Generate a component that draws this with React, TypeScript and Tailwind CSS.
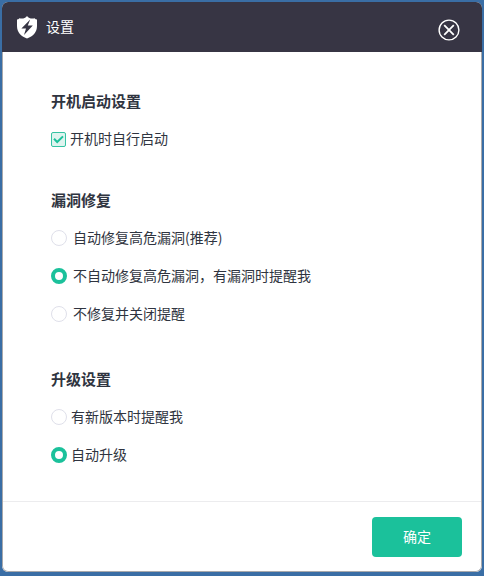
import React from "react";

type RadioOption = {
	value: string;
	label: React.ReactNode;
};

type RadioGroupProps = {
	title: string;
	name: string;
	options: RadioOption[];
	defaultValue: string;
	className?: string;
	rowClassName?: string;
};

const ShieldIcon = () => (
	<svg width="20" height="24" viewBox="0 0 20 24" aria-hidden="true">
		<path
			fill="#fff"
			d="M10 1C8 3.4 5.4 4 2.4 3.2C1.8 3.9 1 4.4 0 4.6V11C0 17 3.8 21.2 10 23.6C16.2 21.2 20 17 20 11V4.6C19 4.4 18.2 3.9 17.6 3.2C14.6 4 12 3.4 10 1Z"
		/>
		<path fill="#373544" d="M13.2 4.6L4.4 13.4H9L7 20L15.8 10.6H10.8L13.2 4.6Z" />
	</svg>
);

const CloseIcon = () => (
	<svg width="22" height="22" viewBox="0 0 22 22" fill="none" stroke="#fff" aria-hidden="true">
		<circle cx="11" cy="11" r="9.9" strokeWidth="1.4" />
		<path d="M6.2 6.2L15.8 15.8M15.8 6.2L6.2 15.8" strokeWidth="1.8" />
	</svg>
);

const RadioGroup = ({
	title,
	name,
	options,
	defaultValue,
	className = "",
	rowClassName = "gap-1",
}: RadioGroupProps) => (
	<fieldset className={className}>
		<legend className="h-9 pb-0.5 text-[15px] leading-[34px] font-bold">{title}</legend>
		{options.map((option) => (
			<label key={option.value} className={`flex h-[38px] items-center text-sm ${rowClassName}`}>
				<input
					type="radio"
					name={name}
					value={option.value}
					defaultChecked={option.value === defaultValue}
					className="size-4 shrink-0 appearance-none rounded-full border border-[#dfe0ea] bg-white checked:border-4 checked:border-[#1bc19b]"
				/>
				<span className="pb-0.5">{option.label}</span>
			</label>
		))}
	</fieldset>
);

const App = () => {
	return (
		<div
			lang="zh-CN"
			className="flex min-h-screen flex-col bg-[#3a6ea5] px-0.5 pt-0.5 pb-1 font-['Noto_Sans_CJK_SC',sans-serif] text-[#2f3440]">
			<div className="flex flex-1 flex-col overflow-hidden rounded-md bg-white">
				<header className="flex h-[50px] shrink-0 items-center justify-between bg-[#373544] pr-[22px] pl-[15px]">
					<div className="flex items-center gap-[9px] text-white">
						<ShieldIcon />
						<h1 className="pb-0.5 text-sm">设置</h1>
					</div>
					<button type="button" aria-label="关闭" className="mt-1.5">
						<CloseIcon />
					</button>
				</header>

				<form className="flex flex-1 flex-col rounded-b-md border-x border-b border-[#a9a9ab]">
					<main className="flex-1 px-12 pt-8 pb-[27px]">
						<fieldset>
							<legend className="h-9 pb-0.5 text-[15px] leading-[34px] font-bold">开机启动设置</legend>
							<label className="flex h-[38px] items-center gap-1 text-sm">
								<span className="relative flex">
									<input
										type="checkbox"
										defaultChecked
										className="peer size-[15px] appearance-none rounded-xs border border-[#35c3a3] bg-[#def4ef]"
									/>
									<svg
										className="pointer-events-none absolute inset-0 hidden peer-checked:block"
										width="15"
										height="15"
										viewBox="0 0 15 15"
										fill="none"
										stroke="#1bc19b"
										strokeWidth="2"
										aria-hidden="true">
										<path d="M3 6.8L6.2 10L12 4.4" />
									</svg>
								</span>
								<span className="pb-0.5">开机时自行启动</span>
							</label>
						</fieldset>

						<RadioGroup
							title="漏洞修复"
							name="repair"
							defaultValue="manual"
							className="mt-[25px]"
							rowClassName="gap-1.5"
							options={[
								{ value: "auto", label: "自动修复高危漏洞(推荐)" },
								{ value: "manual", label: "不自动修复高危漏洞，有漏洞时提醒我" },
								{ value: "off", label: "不修复并关闭提醒" },
							]}
						/>

						<RadioGroup
							title="升级设置"
							name="upgrade"
							defaultValue="auto"
							className="mt-[29px]"
							options={[
								{ value: "notify", label: "有新版本时提醒我" },
								{ value: "auto", label: "自动升级" },
							]}
						/>
					</main>

					<footer className="flex justify-end border-t border-[#ececee] px-[19px] pt-[15px] pb-3.5">
						<button type="submit" className="h-10 w-[90px] rounded bg-[#1bc19b] pb-0.5 text-sm text-white">
							确定
						</button>
					</footer>
				</form>
			</div>
		</div>
	);
};

export default App;
